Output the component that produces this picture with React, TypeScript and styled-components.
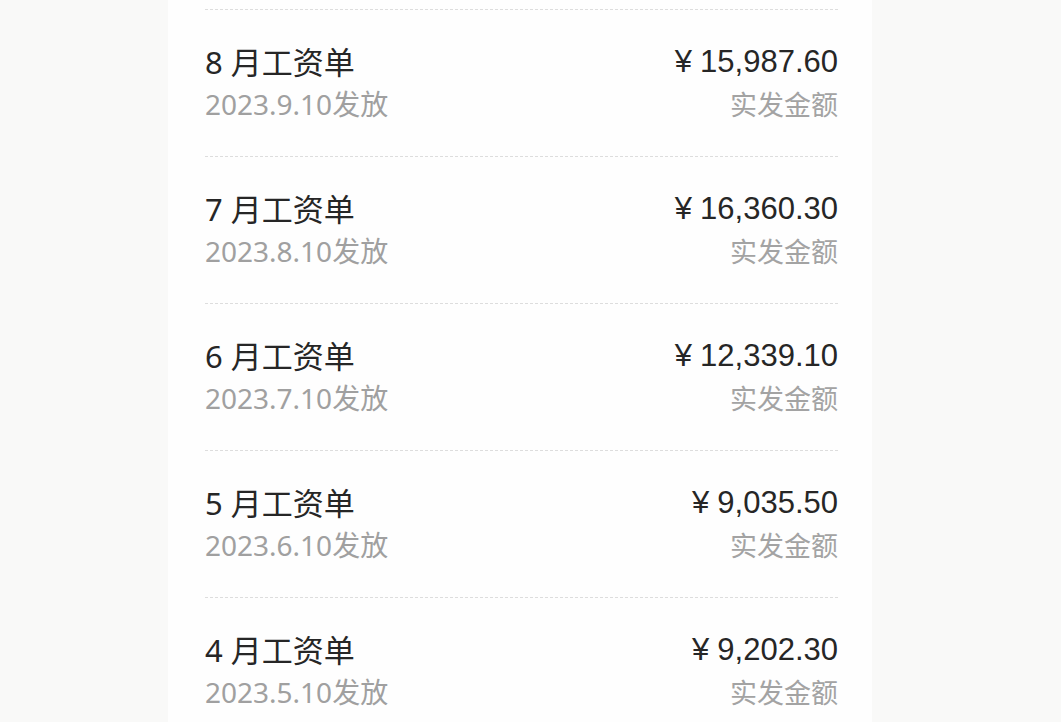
import React from "react";
import styled, { createGlobalStyle } from "styled-components";

const Global = createGlobalStyle`
  html, body { margin: 0; padding: 0; }
  body {
    background: #f9f9f8;
    font-family: "Noto Sans", "Noto Sans CJK SC", sans-serif;
    overflow: hidden;
  }
`;

const Page = styled.div`
  height: 722px;
  display: flex;
`;

const Card = styled.div`
  margin-left: 168px;
  width: 704px;
  background: #fefefe;
  padding: 9px 34px 0 37px;
  box-sizing: border-box;
  display: flex;
  flex-direction: column;
`;

const Row = styled.div`
  height: 147px;
  flex: 0 0 147px;
  box-sizing: border-box;
  border-top: 1px dashed #dddddd;
  display: flex;
  justify-content: space-between;
  align-items: center;
`;

const Col = styled.div<{ $align: "left" | "right" }>`
  display: flex;
  flex-direction: column;
  margin-top: -3px;
  align-items: ${(p) => (p.$align === "left" ? "flex-start" : "flex-end")};
`;

const Title = styled.div`
  font-family: "Noto Sans", "Noto Sans CJK SC", sans-serif;
  font-size: 31px;
  line-height: 44px;
  color: #262626;
  white-space: nowrap;
`;

const DateText = styled.div`
  font-family: "Noto Sans", "Noto Sans CJK SC", sans-serif;
  font-size: 28px;
  line-height: 40px;
  color: #a0a0a0;
  white-space: nowrap;
`;

const Sub = styled.div`
  font-family: "Noto Sans CJK SC", sans-serif;
  font-size: 27px;
  line-height: 40px;
  color: #a3a3a3;
  white-space: nowrap;
`;

const Amount = styled.div`
  font-family: "Liberation Sans", Arial, sans-serif;
  font-size: 31px;
  line-height: 44px;
  color: #262626;
  white-space: nowrap;
`;

const Yen = styled.span`
  margin-right: 8px;
`;

const items = [
  { m: 8, d: "2023.9.10", a: "15,987.60" },
  { m: 7, d: "2023.8.10", a: "16,360.30" },
  { m: 6, d: "2023.7.10", a: "12,339.10" },
  { m: 5, d: "2023.6.10", a: "9,035.50" },
  { m: 4, d: "2023.5.10", a: "9,202.30" },
];

export default function App() {
  return (
    <>
      <Global />
      <Page>
        <Card>
          {items.map((it) => (
            <Row key={it.m}>
              <Col $align="left">
                <Title>{it.m} 月工资单</Title>
                <DateText>{it.d}发放</DateText>
              </Col>
              <Col $align="right">
                <Amount>
                  <Yen>¥</Yen>
                  {it.a}
                </Amount>
                <Sub>实发金额</Sub>
              </Col>
            </Row>
          ))}
        </Card>
      </Page>
    </>
  );
}
